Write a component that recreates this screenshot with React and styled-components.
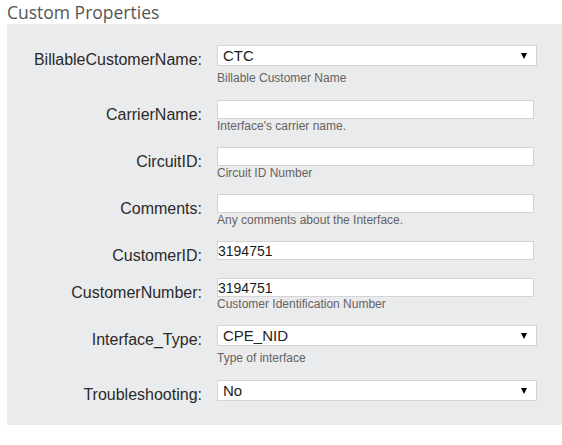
import React from "react";
import styled, { createGlobalStyle } from "styled-components";

const GlobalStyle = createGlobalStyle`
  html, body {
    margin: 0;
    padding: 0;
    background: #ffffff;
  }
  * { box-sizing: border-box; }
`;

const Page = styled.div`
  padding-left: 7px;
  width: 562px;
`;

const Title = styled.h2`
  margin: 0;
  height: 24px;
  font-family: "Open Sans", "Liberation Sans", sans-serif;
  font-weight: 400;
  font-size: 17.5px;
  line-height: 24px;
  color: #555555;
`;

const Panel = styled.div`
  background: #eaebec;
  padding: 21px 0 8px;
`;

const Row = styled.div`
  display: grid;
  grid-template-columns: 195px 1fr;
  column-gap: 15px;
  min-height: 23px;
  margin-bottom: 14px;
`;

const Label = styled.label`
  text-align: right;
  padding-top: 6px;
  font-family: "Liberation Sans", Arial, sans-serif;
  font-size: 16px;
  line-height: 17px;
  color: #2a2a2a;
`;

const Field = styled.div`
  display: flex;
  flex-direction: column;
  align-items: flex-start;
`;

const TextInput = styled.input`
  width: 317px;
  height: 19px;
  margin: 0;
  padding: 1px 1px 0 0;
  border: 1px solid #d4d4d4;
  background: #ffffff;
  font-family: "Liberation Sans", Arial, sans-serif;
  font-size: 14px;
  color: #1a1a1a;
  outline: none;
`;

const SelectWrap = styled.div`
  position: relative;
  width: 320px;
  height: 21px;

  &::after {
    content: "";
    position: absolute;
    top: 7.5px;
    right: 10px;
    width: 0;
    height: 0;
    border-left: 3.5px solid transparent;
    border-right: 3.5px solid transparent;
    border-top: 6px solid #000000;
    pointer-events: none;
  }
`;

const Select = styled.select`
  appearance: none;
  -webkit-appearance: none;
  width: 100%;
  height: 21px;
  margin: 0;
  padding: 0 20px 0 5px;
  border: 1px solid #d4d4d4;
  border-radius: 0;
  background: #ffffff;
  font-family: "Liberation Sans", Arial, sans-serif;
  font-size: 15px;
  font-weight: 400;
  color: #222222;
  outline: none;
`;

const Help = styled.div`
  margin-top: ${(p) => (p.$spaced ? "5px" : "0")};
  margin-bottom: ${(p) => (p.$spaced ? "1px" : "0")};
  font-family: "Liberation Sans", Arial, sans-serif;
  font-size: 12px;
  line-height: 14px;
  color: #666262;
`;

const fields = [
  { label: "BillableCustomerName", type: "select", value: "CTC", help: "Billable Customer Name" },
  { label: "CarrierName", type: "text", value: "", help: "Interface's carrier name." },
  { label: "CircuitID", type: "text", value: "", help: "Circuit ID Number" },
  { label: "Comments", type: "text", value: "", help: "Any comments about the Interface." },
  { label: "CustomerID", type: "text", value: "3194751" },
  { label: "CustomerNumber", type: "text", value: "3194751", help: "Customer Identification Number" },
  { label: "Interface_Type", type: "select", value: "CPE_NID", help: "Type of interface" },
  { label: "Troubleshooting", type: "select", value: "No" },
];

export default function App() {
  return (
    <>
      <GlobalStyle />
      <Page>
        <Title>Custom Properties</Title>
        <Panel>
          {fields.map((f) => (
            <Row key={f.label}>
              <Label>{f.label}:</Label>
              <Field>
                {f.type === "select" ? (
                  <SelectWrap>
                    <Select defaultValue={f.value}>
                      <option value={f.value}>{f.value}</option>
                    </Select>
                  </SelectWrap>
                ) : (
                  <TextInput type="text" defaultValue={f.value} />
                )}
                {f.help && <Help $spaced={f.type === "select"}>{f.help}</Help>}
              </Field>
            </Row>
          ))}
        </Panel>
      </Page>
    </>
  );
}
